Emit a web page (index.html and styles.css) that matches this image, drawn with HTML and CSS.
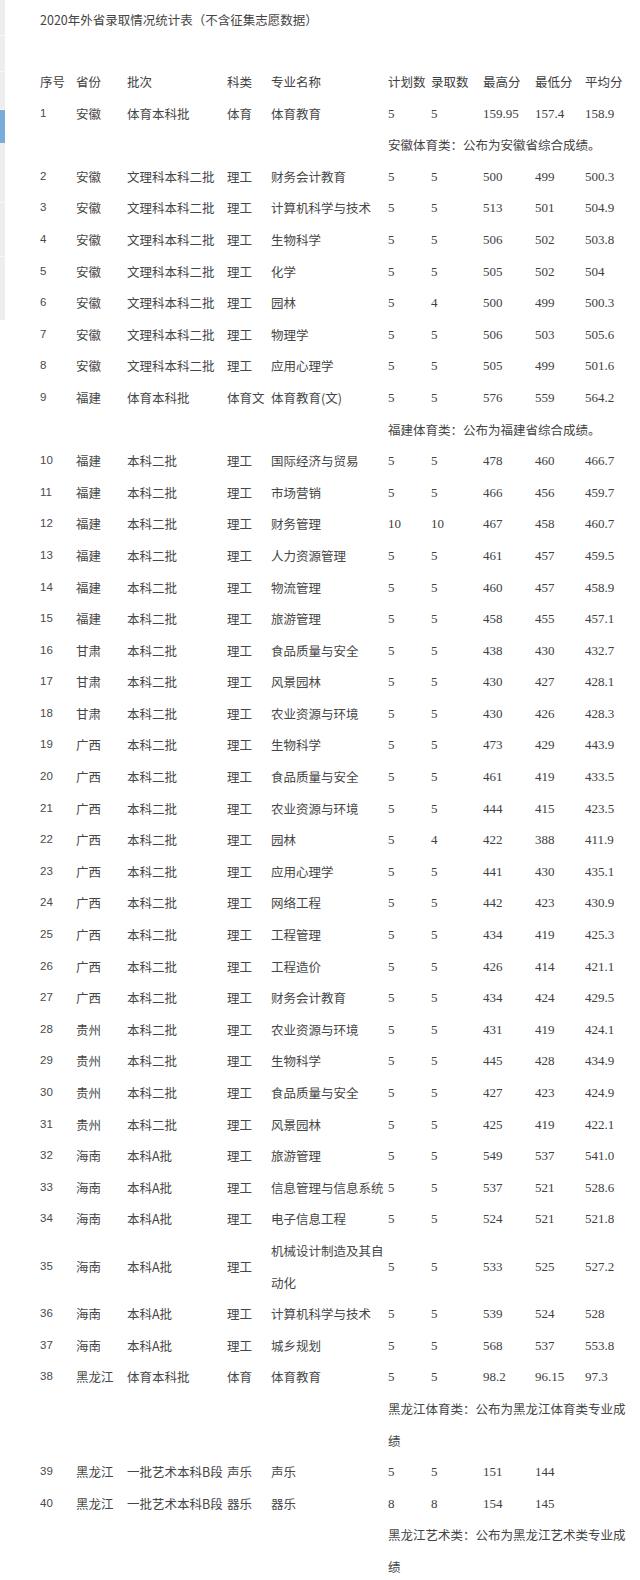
FILE: index.html
```html
<!DOCTYPE html>
<html lang="zh-CN">
<head>
<meta charset="utf-8">
<title>2020年外省录取情况统计表</title>
<link rel="stylesheet" href="styles.css">
</head>
<body>
<div class="page">
  <div class="rail">
    <span class="seg s36"></span>
    <span class="seg s36"></span>
    <span class="seg s38"></span>
    <span class="seg active"></span>
    <span class="seg s60"></span>
    <span class="seg s54"></span>
    <span class="seg s63"></span>
  </div>
  <div class="content">
    <p class="title">2020年外省录取情况统计表（不含征集志愿数据）</p>
    <table class="stats">
      <colgroup>
        <col class="c-idx"><col class="c-prov"><col class="c-batch"><col class="c-type"><col class="c-major">
        <col class="c-plan"><col class="c-adm"><col class="c-max"><col class="c-min"><col class="c-avg">
      </colgroup>
      <tbody>
        <tr class="head"><td>序号</td><td>省份</td><td>批次</td><td>科类</td><td>专业名称</td><td>计划数</td><td>录取数</td><td>最高分</td><td>最低分</td><td>平均分</td></tr>
        <tr><td class="idx">1</td><td>安徽</td><td>体育本科批</td><td>体育</td><td>体育教育</td><td class="num">5</td><td class="num">5</td><td class="num">159.95</td><td class="num">157.4</td><td class="num">158.9</td></tr>
        <tr><td></td><td></td><td></td><td></td><td></td><td class="note" colspan="5">安徽体育类：公布为安徽省综合成绩。</td></tr>
        <tr><td class="idx">2</td><td>安徽</td><td>文理科本科二批</td><td>理工</td><td>财务会计教育</td><td class="num">5</td><td class="num">5</td><td class="num">500</td><td class="num">499</td><td class="num">500.3</td></tr>
        <tr><td class="idx">3</td><td>安徽</td><td>文理科本科二批</td><td>理工</td><td>计算机科学与技术</td><td class="num">5</td><td class="num">5</td><td class="num">513</td><td class="num">501</td><td class="num">504.9</td></tr>
        <tr><td class="idx">4</td><td>安徽</td><td>文理科本科二批</td><td>理工</td><td>生物科学</td><td class="num">5</td><td class="num">5</td><td class="num">506</td><td class="num">502</td><td class="num">503.8</td></tr>
        <tr><td class="idx">5</td><td>安徽</td><td>文理科本科二批</td><td>理工</td><td>化学</td><td class="num">5</td><td class="num">5</td><td class="num">505</td><td class="num">502</td><td class="num">504</td></tr>
        <tr><td class="idx">6</td><td>安徽</td><td>文理科本科二批</td><td>理工</td><td>园林</td><td class="num">5</td><td class="num">4</td><td class="num">500</td><td class="num">499</td><td class="num">500.3</td></tr>
        <tr><td class="idx">7</td><td>安徽</td><td>文理科本科二批</td><td>理工</td><td>物理学</td><td class="num">5</td><td class="num">5</td><td class="num">506</td><td class="num">503</td><td class="num">505.6</td></tr>
        <tr><td class="idx">8</td><td>安徽</td><td>文理科本科二批</td><td>理工</td><td>应用心理学</td><td class="num">5</td><td class="num">5</td><td class="num">505</td><td class="num">499</td><td class="num">501.6</td></tr>
        <tr><td class="idx">9</td><td>福建</td><td>体育本科批</td><td>体育文</td><td>体育教育(文)</td><td class="num">5</td><td class="num">5</td><td class="num">576</td><td class="num">559</td><td class="num">564.2</td></tr>
        <tr><td></td><td></td><td></td><td></td><td></td><td class="note" colspan="5">福建体育类：公布为福建省综合成绩。</td></tr>
        <tr><td class="idx">10</td><td>福建</td><td>本科二批</td><td>理工</td><td>国际经济与贸易</td><td class="num">5</td><td class="num">5</td><td class="num">478</td><td class="num">460</td><td class="num">466.7</td></tr>
        <tr><td class="idx">11</td><td>福建</td><td>本科二批</td><td>理工</td><td>市场营销</td><td class="num">5</td><td class="num">5</td><td class="num">466</td><td class="num">456</td><td class="num">459.7</td></tr>
        <tr><td class="idx">12</td><td>福建</td><td>本科二批</td><td>理工</td><td>财务管理</td><td class="num">10</td><td class="num">10</td><td class="num">467</td><td class="num">458</td><td class="num">460.7</td></tr>
        <tr><td class="idx">13</td><td>福建</td><td>本科二批</td><td>理工</td><td>人力资源管理</td><td class="num">5</td><td class="num">5</td><td class="num">461</td><td class="num">457</td><td class="num">459.5</td></tr>
        <tr><td class="idx">14</td><td>福建</td><td>本科二批</td><td>理工</td><td>物流管理</td><td class="num">5</td><td class="num">5</td><td class="num">460</td><td class="num">457</td><td class="num">458.9</td></tr>
        <tr><td class="idx">15</td><td>福建</td><td>本科二批</td><td>理工</td><td>旅游管理</td><td class="num">5</td><td class="num">5</td><td class="num">458</td><td class="num">455</td><td class="num">457.1</td></tr>
        <tr><td class="idx">16</td><td>甘肃</td><td>本科二批</td><td>理工</td><td>食品质量与安全</td><td class="num">5</td><td class="num">5</td><td class="num">438</td><td class="num">430</td><td class="num">432.7</td></tr>
        <tr><td class="idx">17</td><td>甘肃</td><td>本科二批</td><td>理工</td><td>风景园林</td><td class="num">5</td><td class="num">5</td><td class="num">430</td><td class="num">427</td><td class="num">428.1</td></tr>
        <tr><td class="idx">18</td><td>甘肃</td><td>本科二批</td><td>理工</td><td>农业资源与环境</td><td class="num">5</td><td class="num">5</td><td class="num">430</td><td class="num">426</td><td class="num">428.3</td></tr>
        <tr><td class="idx">19</td><td>广西</td><td>本科二批</td><td>理工</td><td>生物科学</td><td class="num">5</td><td class="num">5</td><td class="num">473</td><td class="num">429</td><td class="num">443.9</td></tr>
        <tr><td class="idx">20</td><td>广西</td><td>本科二批</td><td>理工</td><td>食品质量与安全</td><td class="num">5</td><td class="num">5</td><td class="num">461</td><td class="num">419</td><td class="num">433.5</td></tr>
        <tr><td class="idx">21</td><td>广西</td><td>本科二批</td><td>理工</td><td>农业资源与环境</td><td class="num">5</td><td class="num">5</td><td class="num">444</td><td class="num">415</td><td class="num">423.5</td></tr>
        <tr><td class="idx">22</td><td>广西</td><td>本科二批</td><td>理工</td><td>园林</td><td class="num">5</td><td class="num">4</td><td class="num">422</td><td class="num">388</td><td class="num">411.9</td></tr>
        <tr><td class="idx">23</td><td>广西</td><td>本科二批</td><td>理工</td><td>应用心理学</td><td class="num">5</td><td class="num">5</td><td class="num">441</td><td class="num">430</td><td class="num">435.1</td></tr>
        <tr><td class="idx">24</td><td>广西</td><td>本科二批</td><td>理工</td><td>网络工程</td><td class="num">5</td><td class="num">5</td><td class="num">442</td><td class="num">423</td><td class="num">430.9</td></tr>
        <tr><td class="idx">25</td><td>广西</td><td>本科二批</td><td>理工</td><td>工程管理</td><td class="num">5</td><td class="num">5</td><td class="num">434</td><td class="num">419</td><td class="num">425.3</td></tr>
        <tr><td class="idx">26</td><td>广西</td><td>本科二批</td><td>理工</td><td>工程造价</td><td class="num">5</td><td class="num">5</td><td class="num">426</td><td class="num">414</td><td class="num">421.1</td></tr>
        <tr><td class="idx">27</td><td>广西</td><td>本科二批</td><td>理工</td><td>财务会计教育</td><td class="num">5</td><td class="num">5</td><td class="num">434</td><td class="num">424</td><td class="num">429.5</td></tr>
        <tr><td class="idx">28</td><td>贵州</td><td>本科二批</td><td>理工</td><td>农业资源与环境</td><td class="num">5</td><td class="num">5</td><td class="num">431</td><td class="num">419</td><td class="num">424.1</td></tr>
        <tr><td class="idx">29</td><td>贵州</td><td>本科二批</td><td>理工</td><td>生物科学</td><td class="num">5</td><td class="num">5</td><td class="num">445</td><td class="num">428</td><td class="num">434.9</td></tr>
        <tr><td class="idx">30</td><td>贵州</td><td>本科二批</td><td>理工</td><td>食品质量与安全</td><td class="num">5</td><td class="num">5</td><td class="num">427</td><td class="num">423</td><td class="num">424.9</td></tr>
        <tr><td class="idx">31</td><td>贵州</td><td>本科二批</td><td>理工</td><td>风景园林</td><td class="num">5</td><td class="num">5</td><td class="num">425</td><td class="num">419</td><td class="num">422.1</td></tr>
        <tr><td class="idx">32</td><td>海南</td><td>本科A批</td><td>理工</td><td>旅游管理</td><td class="num">5</td><td class="num">5</td><td class="num">549</td><td class="num">537</td><td class="num">541.0</td></tr>
        <tr><td class="idx">33</td><td>海南</td><td>本科A批</td><td>理工</td><td>信息管理与信息系统</td><td class="num">5</td><td class="num">5</td><td class="num">537</td><td class="num">521</td><td class="num">528.6</td></tr>
        <tr><td class="idx">34</td><td>海南</td><td>本科A批</td><td>理工</td><td>电子信息工程</td><td class="num">5</td><td class="num">5</td><td class="num">524</td><td class="num">521</td><td class="num">521.8</td></tr>
        <tr><td class="idx">35</td><td>海南</td><td>本科A批</td><td>理工</td><td>机械设计制造及其自动化</td><td class="num">5</td><td class="num">5</td><td class="num">533</td><td class="num">525</td><td class="num">527.2</td></tr>
        <tr><td class="idx">36</td><td>海南</td><td>本科A批</td><td>理工</td><td>计算机科学与技术</td><td class="num">5</td><td class="num">5</td><td class="num">539</td><td class="num">524</td><td class="num">528</td></tr>
        <tr><td class="idx">37</td><td>海南</td><td>本科A批</td><td>理工</td><td>城乡规划</td><td class="num">5</td><td class="num">5</td><td class="num">568</td><td class="num">537</td><td class="num">553.8</td></tr>
        <tr><td class="idx">38</td><td>黑龙江</td><td>体育本科批</td><td>体育</td><td>体育教育</td><td class="num">5</td><td class="num">5</td><td class="num">98.2</td><td class="num">96.15</td><td class="num">97.3</td></tr>
        <tr><td></td><td></td><td></td><td></td><td></td><td class="note" colspan="5">黑龙江体育类：公布为黑龙江体育类专业成绩</td></tr>
        <tr><td class="idx">39</td><td>黑龙江</td><td>一批艺术本科B段</td><td>声乐</td><td>声乐</td><td class="num">5</td><td class="num">5</td><td class="num">151</td><td class="num">144</td><td class="num"></td></tr>
        <tr><td class="idx">40</td><td>黑龙江</td><td>一批艺术本科B段</td><td>器乐</td><td>器乐</td><td class="num">8</td><td class="num">8</td><td class="num">154</td><td class="num">145</td><td class="num"></td></tr>
        <tr><td></td><td></td><td></td><td></td><td></td><td class="note" colspan="5">黑龙江艺术类：公布为黑龙江艺术类专业成绩</td></tr>
      </tbody>
    </table>
  </div>
</div>
</body>
</html>
```

FILE: styles.css
```css
html, body {
  margin: 0;
  padding: 0;
  background: #ffffff;
}

body {
  font-family: "Noto Sans CJK SC", "Noto Sans", sans-serif;
  color: #464646;
}

.page {
  display: flex;
  align-items: flex-start;
}

.rail {
  flex: none;
  width: 5px;
  display: flex;
  flex-direction: column;
  background: #ededed;
}

.seg {
  display: block;
  box-sizing: border-box;
  border-bottom: 1px solid #f7f7f7;
}

.s36 { height: 36px; }
.s38 { height: 38px; }
.s60 { height: 60px; }
.s54 { height: 54px; }
.s63 { height: 63px; border-bottom: none; }

.seg.active {
  height: 33px;
  background: #78acd9;
  border-bottom: none;
}

.content {
  flex: 1;
  padding-left: 35px;
}

.title {
  margin: 4px 0 0;
  font-size: 12.5px;
  line-height: 32px;
  font-weight: normal;
  color: #444444;
}

.stats {
  margin-top: 30px;
  border-collapse: collapse;
  border-spacing: 0;
  table-layout: fixed;
  width: 593px;
  font-size: 12.5px;
  line-height: 31.6px;
}

.stats td {
  padding: 0;
  text-align: left;
  vertical-align: middle;
}

.c-idx { width: 36px; }
.c-prov { width: 51px; }
.c-batch { width: 100px; }
.c-type { width: 44px; }
.c-major { width: 117px; }
.c-plan { width: 43px; }
.c-adm { width: 52px; }
.c-max { width: 52px; }
.c-min { width: 50px; }
.c-avg { width: 48px; }

.head td {
  color: #404040;
}

.idx {
  font-family: "Liberation Sans", Arial, sans-serif;
  font-size: 11.5px;
  color: #4a4a4a;
}

.num {
  font-family: "Liberation Serif", "Times New Roman", serif;
  font-size: 13px;
  color: #404040;
}

.note {
  color: #444444;
}
```
